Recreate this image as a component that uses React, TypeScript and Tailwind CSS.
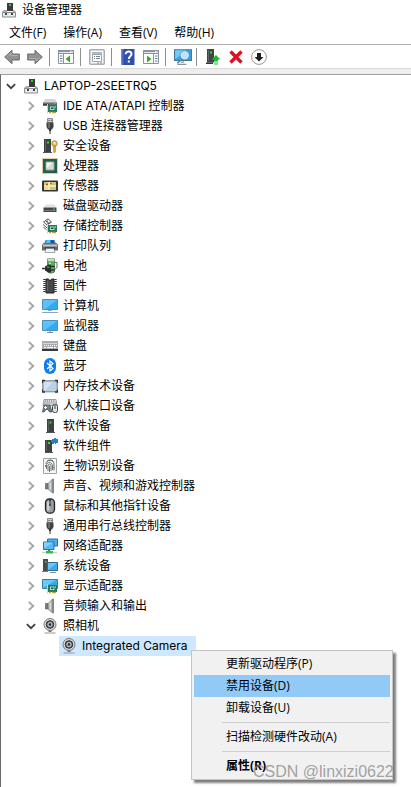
import type { ReactNode } from "react";

function Svg({ children, className = "size-4" }: { children: ReactNode; className?: string }) {
  return (
    <svg viewBox="0 0 16 16" className={`${className} shrink-0`} aria-hidden="true">
      {children}
    </svg>
  );
}

const ComputerIcon = () => (
  <Svg>
    <path d="M6 1h6v8H6z" fill="#3b3b3b" />
    <path d="M8 2h2v2H8z" fill="#25d52a" />
    <path d="M3 8h3v2h6V8h1l2 2v1H1v-1z" fill="#a9acad" />
    <path d="M1.500 10.500h13V15h-13z" fill="#e9ebec" stroke="#8b8e90" strokeWidth="1" />
    <path d="M4 11h2v2H4zM10 11h2v2h-2z" fill="#454545" />
  </Svg>
);

const Board = () => (
  <>
    <path d="M6 7h9v7H6z" fill="#1f7a5e" />
    <path d="M5.500 6v9.500" stroke="#c9d2d0" strokeWidth="1" />
    <path d="M8 8.500h4.500V12H8z" fill="#b9dccb" />
    <path d="M9 9.500h2.500V11H9z" fill="#214b3c" />
    <path d="M7 14.500h2M10 14.500h4" stroke="#c8a13a" strokeWidth="1.400" />
    <path d="M13 8h1v2h-1z" fill="#59c78d" />
  </>
);

const IdeIcon = () => (
  <Svg>
    <path d="M3 1h10l2 4H1z" fill="#d2d4d5" />
    <path d="M1 4.500h14v3.500H1z" fill="#6b6f70" />
    <path d="M1 6.500h6" stroke="#3c3f40" />
    <path d="M12 5h2v1h-2z" fill="#23d643" />
    <Board />
  </Svg>
);

const UsbIcon = () => (
  <Svg>
    <path d="M5.500.5h5v4h-5z" fill="#c9c9c9" stroke="#777" strokeWidth=".8" />
    <path d="M6.500 2h1v1h-1zM8.800 2h1v1h-1z" fill="#555" />
    <path d="M4.500 4.500h7V9L10 11.500H6L4.500 9z" fill="#414141" />
    <path d="M6 5h2v5H6z" fill="#6a6a6a" />
    <path d="M7 11h2v2H7z" fill="#333" />
    <path d="M8 13v3" stroke="#777" strokeWidth="1.500" />
  </Svg>
);

const SecurityIcon = () => (
  <Svg>
    <path d="M2 1h7v13H2z" fill="#3e4141" />
    <path d="M3 2h1v11H3z" fill="#626565" />
    <path d="M5 3.500h2v2H5z" fill="#30e52c" />
    <path d="M1 14h9v1H1z" fill="#555" />
    <circle cx="12.500" cy="5.500" r="2.700" fill="#f2c75f" stroke="#b98122" strokeWidth="1" />
    <path d="M11.500 8h2v5.500l-1 1.500-1-1z" fill="#e0a73a" stroke="#a87319" strokeWidth=".5" />
    <circle cx="12.500" cy="4.800" r=".9" fill="#fff" />
  </Svg>
);

const CpuIcon = () => (
  <Svg>
    <path d="M.5 .5h15v15H.5z" fill="none" stroke="#b99d4a" strokeDasharray="1 1" />
    <path d="M1 1h14v14H1z" fill="#235e47" />
    <path d="M4 4h8v8H4z" fill="#d7dad9" stroke="#8fa79b" />
    <path d="M4.500 4.500h6l-6 6z" fill="#f2f3f2" />
  </Svg>
);

const SensorIcon = () => (
  <Svg>
    <rect x="0" y="2.500" width="16" height="11" rx="1" fill="#353535" />
    <path d="M2 4h12v8H2z" fill="#f4d88c" />
    <path d="M2 4h4v3H2zM9 4h5v3H9zM8 9h6v3H8z" fill="#b9cf78" />
    <path d="M2 8h12M7 4v8" stroke="#fff2ca" />
    <path d="M4 6.500h2M8 5.500h1.500" stroke="#d34b37" strokeWidth="1.500" />
  </Svg>
);

const DiskIcon = () => (
  <Svg>
    <path d="M3.500 6.500h9L14 9.500H2z" fill="#e0e2e3" />
    <path d="M1.500 9.500h13V14h-13z" fill="#424648" />
    <path d="M2.500 12.500h11" stroke="#777b7c" />
    <path d="M11 10.500h2v1h-2z" fill="#37dd4e" />
  </Svg>
);

const StorageIcon = () => (
  <Svg>
    <path d="M1.500 4 6 .8 9.500 4 5 7z" fill="#f5f5f5" stroke="#555" />
    <path d="M4 4 6 2.800M5 5h3" stroke="#333" fill="none" />
    <path d="m1 6.500 4 3.500M1.500 9l3 3" stroke="#555" />
    <Board />
  </Svg>
);

const PrinterIcon = () => (
  <Svg>
    <path d="M3.500 2h9L14 6H2z" fill="#398ccc" />
    <path d="M5 2h3v3H4z" fill="#52c5ef" />
    <path d="M9 2h2.500l1 3H9z" fill="#1654a7" />
    <path d="M1.500 5h13L16 7v5.500H0V7z" fill="#686b6e" />
    <path d="M1 6.500h14v2H1z" fill="#c3c6c8" />
    <path d="M3 9.500h10V12H3z" fill="#252729" />
    <path d="M4 10.500h8l1 4H3z" fill="#edf4f8" stroke="#7f8a8f" strokeWidth=".7" />
  </Svg>
);

const BatteryIcon = () => (
  <Svg>
    <path d="M5.500 1h7v13l-2 1h-3l-2-1z" fill="#43bd4d" stroke="#587260" strokeWidth=".8" />
    <path d="M5.500.8h7v2.400h-7z" fill="#d9eeda" stroke="#7c8b7e" strokeWidth=".6" />
    <path d="M12.500 4.500H15v5l-2.500 2" fill="none" stroke="#587260" strokeWidth="1" />
    <path d="M7 4.500h2v4H7z" fill="#a2f08d" />
    <path d="M0 10.500h3M8 8.500h5M8 12h5" stroke="#353535" strokeWidth="1.500" />
    <path d="M9 6.500v8H6.500L3 12.500v-4l3.500-2z" fill="#2c2c2c" />
    <path d="M5 8.500h2.500V10H5z" fill="#777" />
  </Svg>
);

const FirmwareIcon = () => (
  <Svg>
    <path d="M2.500 1v14M13.500 1v14" stroke="#333" strokeWidth="2.500" strokeDasharray="1 1" />
    <path d="M4 1h2.500a1.500 1.500 0 0 0 3 0H12v14H4z" fill="#484848" stroke="#222" />
    <path d="M5 3h1v10H5z" fill="#676767" />
  </Svg>
);

const Screen = ({ base }: { base: boolean }) => (
  <>
    <path d={base ? "M.5 1.500h15v10H.5z" : "M.5 2.500h15v10H.5z"} fill="#32aaf2" stroke="#387da8" strokeWidth=".8" />
    <path d={base ? "M1 2h14L3 11H1z" : "M1 3h14L3 12H1z"} fill="#5cc0f9" />
    {base ? (
      <path d="M0 14.500h16M6 12.500h4" stroke="#8ea6bd" strokeWidth="1" />
    ) : (
      <path d="M5 14.500h6M8 12.500v2" stroke="#7a8992" strokeWidth="1" />
    )}
  </>
);
const PcIcon = () => (
  <Svg>
    <Screen base />
  </Svg>
);
const MonitorIcon = () => (
  <Svg>
    <Screen base={false} />
  </Svg>
);

const KeyboardIcon = () => (
  <Svg>
    <path d="M0 3h16v10H0z" fill="#a9acae" />
    <path d="M0 11h16v2H0z" fill="#373a3d" />
    <path d="M1.500 5.500h13M2 7.500h13" stroke="#fff" strokeDasharray="1 1" />
    <path d="M2 9.500h2M5 9.500h6M12 9.500h2" stroke="#fff" />
  </Svg>
);

const BluetoothIcon = () => (
  <Svg>
    <rect x="2" y="0" width="12" height="16" rx="6" fill="#0a7cf5" />
    <path d="m5 5 6 5.500L8 13V3l3 2.500L5 11" fill="none" stroke="#fff" strokeWidth="1.200" />
  </Svg>
);

const MemoryIcon = () => (
  <Svg>
    <rect x=".8" y="2.800" width="14.400" height="11" rx="1" fill="#b9d1e6" stroke="#777f86" />
    <path d="M2 4h9L3 12.500H2z" fill="#d0e2f2" />
    <path d="M.5 5V2.500H3M13 2.500h2.500V5M.5 11.500V14H3M13 14h2.500v-2.500" fill="none" stroke="#333" strokeWidth="1.300" />
  </Svg>
);

const HidIcon = () => (
  <Svg>
    <path d="M2 1.500h12l1 6H1z" fill="#d5d9dc" stroke="#868b90" strokeWidth=".8" />
    <path d="M3 3h10M2.500 5h11" stroke="#72777c" strokeDasharray="1 1" />
    <path d="M2 7h6l2 7H7.500L6 11.500H4L2 14H.5z" fill="#737b82" stroke="#3e454a" strokeWidth=".7" />
    <path d="M3 8h1v3H3zM2 9h3v1H2z" fill="#fff" />
    <circle cx="7" cy="9" r="1" fill="#2e95eb" />
    <path d="M5.500 7.500h1v1h-1z" fill="#e4b528" />
    <rect x="10.500" y="6.500" width="5" height="8" rx="2" fill="#dfe3e5" stroke="#3c4247" />
    <path d="M13 7v4" stroke="#3c4247" />
  </Svg>
);

const SoftwareIcon = () => (
  <Svg>
    <path d="M5 1h7v13H5z" fill="#3e4141" />
    <path d="M6 2h1v11H6z" fill="#5d6060" />
    <path d="M7.500 3.500h2v2h-2z" fill="#30e52c" />
    <path d="M4 14h9v1H4z" fill="#555" />
  </Svg>
);

const ComponentIcon = () => (
  <Svg>
    <path d="M3 2h7v12H3z" fill="#3e4141" />
    <path d="M4 3h1v10H4z" fill="#5d6060" />
    <path d="M6 4h2v2H6z" fill="#30e52c" />
    <path d="M3 14h8v1H3z" fill="#555" />
    <path d="M10 1h2V0h2v1h2v4h-2v1h-1V5h-1v1h-2V4H9V2h1z" fill="#2582c9" />
  </Svg>
);

const FingerprintIcon = () => (
  <Svg>
    <path d="M1.500.5h13v15h-13z" fill="#f3f7f5" stroke="#9aa9a3" />
    <g fill="none" stroke="#4c5250" strokeWidth=".8">
      <path d="M4 6c0-5 8-5 8 0v4M4.500 11V8c0-5 6-4.500 6 0v4M6 13V8c0-2.500 3-2.500 3 0v5M7.500 14V8M3.500 9V7M12 12.500V9" />
      <path d="M5 3.200C7 1.500 10 1.700 11.500 3.500" />
    </g>
  </Svg>
);

const SpeakerIcon = () => (
  <Svg>
    <path d="M3.500 5.500H6v5.500H3.500z" fill="#777c80" stroke="#555" strokeWidth=".6" />
    <path d="M6 5.500 10.500 1v14L6 11z" fill="#a9afb4" stroke="#777" strokeWidth=".6" />
    <path d="M7.500 5 9 3.500v9L7.500 11z" fill="#d9dde0" />
    <path d="M11.200.7v14.600" stroke="#6a7279" strokeWidth="1.300" />
  </Svg>
);

const MouseIcon = () => (
  <Svg>
    <rect x="3.500" y=".8" width="9" height="14.400" rx="4" fill="#959ca2" stroke="#202326" strokeWidth="1.300" />
    <path d="M5 3.500h2.500v9H5z" fill="#c9d1d7" />
    <path d="M8 1v7" stroke="#292d31" strokeWidth="1.500" />
    <path d="M8 3v3" stroke="#69b0e1" strokeWidth=".8" />
  </Svg>
);

const NetworkIcon = () => (
  <Svg>
    <path d="M5.500 1h10v7h-10z" fill="#45b4f3" stroke="#29719e" />
    <path d="M1.500 4h10.500v7.500H1.500z" fill="#55bbf6" stroke="#29719e" />
    <path d="M2 4.500h9L2 10z" fill="#87d2fb" />
    <path d="M6 12h2v2H6z" fill="#2f8c3e" />
    <path d="M0 14.500h15" stroke="#cbd0d0" strokeWidth="1.500" />
    <path d="M4 14.200h7" stroke="#37b94a" strokeWidth="2.500" />
  </Svg>
);

const SystemIcon = () => (
  <Svg>
    <path d="M1 1h5v12H1z" fill="#454c50" />
    <path d="M3 3h1.500v1.500H3z" fill="#31df3a" />
    <path d="M0 13h6v1H0z" fill="#777" />
    <path d="M5.500 4.500h10v8h-10z" fill="#37abef" stroke="#376a88" />
    <path d="M6 5h9l-9 7z" fill="#69c5f8" />
    <path d="M8 14.500h6" stroke="#829099" />
  </Svg>
);

const DisplayIcon = () => (
  <Svg>
    <path d="M.5 1.500h15v9H.5z" fill="#32aaf2" stroke="#387da8" />
    <path d="M1 2h13L1 10z" fill="#69c7fa" />
    <Board />
  </Svg>
);

const CameraIcon = () => (
  <Svg>
    <circle cx="8" cy="6.500" r="6" fill="#dadada" stroke="#777" />
    <circle cx="8" cy="6.500" r="3.800" fill="#565b60" stroke="#333" />
    <circle cx="8" cy="6.500" r="2.200" fill="#9cb0c0" stroke="#dce1e5" strokeWidth=".6" />
    <circle cx="8" cy="6.500" r="1.200" fill="#23272b" />
    <path d="M6.500 12.500h3V14h-3z" fill="#777" />
    <path d="M2.500 15h11" stroke="#999" />
  </Svg>
);

function Chevron({ open = false }: { open?: boolean }) {
  return (
    <Svg className="size-3">
      <path
        d={open ? "m2.500 5.500 5.500 5.500 5.500-5.500" : "m5 2.500 6 5.500-6 5.500"}
        fill="none"
        stroke={open ? "#404040" : "#a3a3a3"}
        strokeWidth="2.400"
      />
    </Svg>
  );
}

const devices: [string, () => ReactNode][] = [
  ["IDE ATA/ATAPI 控制器", IdeIcon],
  ["USB 连接器管理器", UsbIcon],
  ["安全设备", SecurityIcon],
  ["处理器", CpuIcon],
  ["传感器", SensorIcon],
  ["磁盘驱动器", DiskIcon],
  ["存储控制器", StorageIcon],
  ["打印队列", PrinterIcon],
  ["电池", BatteryIcon],
  ["固件", FirmwareIcon],
  ["计算机", PcIcon],
  ["监视器", MonitorIcon],
  ["键盘", KeyboardIcon],
  ["蓝牙", BluetoothIcon],
  ["内存技术设备", MemoryIcon],
  ["人机接口设备", HidIcon],
  ["软件设备", SoftwareIcon],
  ["软件组件", ComponentIcon],
  ["生物识别设备", FingerprintIcon],
  ["声音、视频和游戏控制器", SpeakerIcon],
  ["鼠标和其他指针设备", MouseIcon],
  ["通用串行总线控制器", UsbIcon],
  ["网络适配器", NetworkIcon],
  ["系统设备", SystemIcon],
  ["显示适配器", DisplayIcon],
  ["音频输入和输出", SpeakerIcon],
];

const Window = ({ play }: { play: boolean }) => (
  <Svg>
    <path d="M.5 1.500h15v13H.5z" fill="#fff" stroke="#8a949e" />
    <path d="M0 1h16v4H0z" fill="#8a949e" />
    <path d="M1 3.500h14" stroke="#e6eaed" />
    <path d="M12 2.300h3" stroke="#fff" strokeDasharray="1 .5" />
    <path d={play ? "M10.500 5v10" : "M5.500 5v10"} stroke="#8a949e" />
    <path d={play ? "M12 7h2.500M12 9.500h2.500M12 12h2.500" : "M2 7h2.500M2 9.500h2.500M2 12h2.500"} stroke="#607b94" />
    <path d={play ? "M4 6.500v7L8.500 10z" : "M12 6.500v7L7.500 10z"} fill="#35ab22" />
  </Svg>
);

const Arrow = ({ flip }: { flip: boolean }) => (
  <Svg className={flip ? "size-4 rotate-180" : "size-4"}>
    <path d="M.7 8 8 1.300v3.700h7.300v6H8v3.700z" fill="#929292" stroke="#6a6a6a" />
    <path d="M3 7.500 7 4v2.500h7" fill="none" stroke="#b0b0b0" />
  </Svg>
);

const PropertiesIcon = () => (
  <Svg>
    <path d="M.8.800h14.400v14.400H.8z" fill="#f5f6f7" stroke="#858b90" />
    <path d="M3 3h10v2H3z" fill="#b4bbc0" />
    <path d="M3.500 5.500h9v7h-9z" fill="#fff" stroke="#9da5ab" />
    <path d="M5 7.500h1M7 7.500h4M5 9.500h1M7 9.500h4" stroke="#718492" />
    <path d="M8 14h2M11 14h2" stroke="#869198" />
  </Svg>
);

const HelpIcon = () => (
  <Svg>
    <path d="M1.500 0h13v16h-13z" fill="#2e4fae" />
    <path d="M1.500 0h2v16h-2z" fill="#4f6dc4" />
    <path d="M5.700 5.200C5.700 1.500 11.500 2 11.500 5c0 2.200-2.700 2.300-2.700 5" fill="none" stroke="#fff" strokeWidth="2" />
    <path d="M7.800 11.500h2v2h-2z" fill="#fff" />
  </Svg>
);

const ScanIcon = () => (
  <Svg className="size-[18px]">
    <path d="M.5 1.500h15v9.500H.5z" fill="#35a8ec" stroke="#44799a" />
    <path d="M1 2h10L1 10z" fill="#70cafa" />
    <path d="M3 14.500h8M6 12.500h3" stroke="#84959f" />
    <circle cx="9.500" cy="6.500" r="3.500" fill="#b7e5fb" stroke="#e7f6fd" />
    <circle cx="9.500" cy="6.500" r="4" fill="none" stroke="#527a91" strokeWidth=".6" />
    <path d="m7 9.500-4 4" stroke="#63859a" strokeWidth="1.500" />
  </Svg>
);

const UpdateIcon = () => (
  <Svg>
    <path d="M2 0h7v13.500H2z" fill="#424545" />
    <path d="M3 1h1v11H3z" fill="#626565" />
    <path d="M5 2.500h2v2H5z" fill="#2be42b" />
    <path d="M1 13.500h7V15H1z" fill="#333" />
    <path d="m11 6 4.500 4.500h-2.500V12H9v-1.500H6.500z" fill="#1db832" />
    <path d="M9 13h4M9 15h4" stroke="#1db832" strokeWidth="1.200" />
  </Svg>
);

const RemoveIcon = () => (
  <Svg>
    <path d="m2.500 2.500 11 11M13.500 2.500l-11 11" stroke="#df1022" strokeWidth="3.400" />
  </Svg>
);

const DisableIcon = () => (
  <Svg>
    <circle cx="8" cy="8" r="7.400" fill="#fff" stroke="#959595" />
    <path d="M6 4h4v4h2.500L8 12.500 3.500 8H6z" fill="#1d1d1d" />
  </Svg>
);

const Sep = ({ gap }: { gap: string }) => <span className={`h-[18px] w-px shrink-0 bg-[#8e8e8e] ${gap}`} />;

function Tool({ label, children }: { label: string; children: ReactNode }) {
  return (
    <button type="button" aria-label={label} className="flex shrink-0 items-center justify-center">
      {children}
    </button>
  );
}

function ContextItem({ children, look = "" }: { children: ReactNode; look?: string }) {
  return (
    <button type="button" role="menuitem" className={`flex h-[22px] w-full items-center pl-8 text-left ${look}`}>
      {children}
    </button>
  );
}

const Divider = () => <hr className="my-[3px] ml-7 border-t border-[#d0d0d0]" />;

export default function App() {
  return (
    <div className="flex min-h-screen flex-col bg-white font-['Open_Sans','Noto_Sans_CJK_SC',sans-serif] text-[12px] leading-5 text-black">
      <header className="flex h-5 items-center gap-1 pl-px">
        <ComputerIcon />
        <h1 className="pl-px">设备管理器</h1>
      </header>
      <nav className="flex h-6 items-center gap-[17px] pt-0.5 pl-[9px]">
        <button type="button">文件(F)</button>
        <button type="button">操作(A)</button>
        <button type="button">查看(V)</button>
        <button type="button">帮助(H)</button>
      </nav>
      <div role="toolbar" className="flex h-6 items-center border-t border-[#b0b0b0] pt-px pl-1">
        <Tool label="后退"><Arrow flip={false} /></Tool>
        <span className="w-[7px]" />
        <Tool label="前进"><Arrow flip /></Tool>
        <Sep gap="mr-2 ml-1.5" />
        <Tool label="显示控制台树"><Window play={false} /></Tool>
        <Sep gap="mr-2 ml-1.5" />
        <Tool label="属性"><PropertiesIcon /></Tool>
        <Sep gap="mr-2 ml-1.5" />
        <Tool label="帮助"><HelpIcon /></Tool>
        <span className="w-[7px]" />
        <Tool label="显示操作窗格"><Window play /></Tool>
        <Sep gap="mr-2 ml-1.5" />
        <Tool label="扫描检测硬件改动"><ScanIcon /></Tool>
        <Sep gap="mr-2 ml-1" />
        <Tool label="更新驱动程序"><UpdateIcon /></Tool>
        <span className="w-[7px]" />
        <Tool label="卸载设备"><RemoveIcon /></Tool>
        <span className="w-[7px]" />
        <Tool label="禁用设备"><DisableIcon /></Tool>
      </div>
      <div className="h-1.5 border-t border-[#dadada] bg-[#eeeeee]" />
      <main className="grow border-t border-l border-t-[#a0a0a0] border-l-[#696969] pt-px font-['Inter','Noto_Sans_CJK_SC',sans-serif]">
        <div className="flex h-5 items-center pl-1">
          <Chevron open />
          <span className="flex items-center gap-[5px] pl-1.5">
            <ComputerIcon />
            LAPTOP-2SEETRQ5
          </span>
        </div>
        <ul>
          {devices.map(([name, Icon]) => (
            <li key={name} className="flex h-5 items-center pl-6">
              <Chevron />
              <span className="flex items-center gap-[5px] pl-[5px]">
                <Icon />
                {name}
              </span>
            </li>
          ))}
          <li>
            <div className="flex h-5 items-center pl-6">
              <Chevron open />
              <span className="flex items-center gap-[5px] pl-[5px]">
                <CameraIcon />
                照相机
              </span>
            </div>
            <div className="relative ml-[58px] flex h-5 w-[137px] items-center gap-[5px] bg-[#cde8ff] pl-0.5 whitespace-nowrap">
              <CameraIcon />
              Integrated Camera
              <div
                role="menu"
                className="absolute top-3.5 left-[132px] w-[202px] border border-[#c5c5c5] bg-[#f1f1f1] p-0.5 font-['Open_Sans','Noto_Sans_CJK_SC',sans-serif] shadow-[3px_3px_2px_rgba(0,0,0,0.5)]"
              >
                <ContextItem>更新驱动程序(P)</ContextItem>
                <ContextItem look="bg-[#91c9f7]">禁用设备(D)</ContextItem>
                <ContextItem>卸载设备(U)</ContextItem>
                <Divider />
                <ContextItem>扫描检测硬件改动(A)</ContextItem>
                <Divider />
                <ContextItem look="font-bold">属性(R)</ContextItem>
                <span className="absolute top-[111px] left-[61px] font-['Liberation_Sans',sans-serif] text-[16px] text-[#8c8c8c]/80">
                  CSDN @linxizi0622
                </span>
              </div>
            </div>
          </li>
        </ul>
      </main>
    </div>
  );
}
